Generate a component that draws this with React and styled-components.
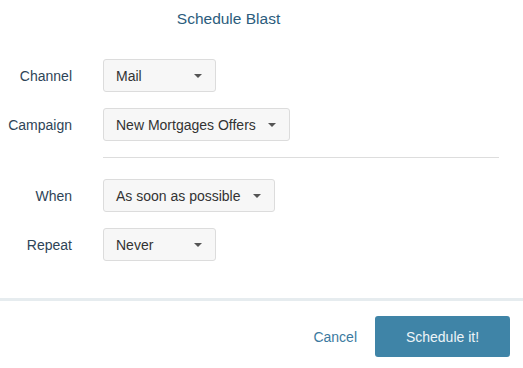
import React from "react";
import styled, { createGlobalStyle } from "styled-components";

const Global = createGlobalStyle`
  html, body { margin: 0; padding: 0; background: #ffffff; }
  body { font-family: "Liberation Sans", Arial, Helvetica, sans-serif; }
  * { box-sizing: border-box; }
`;

const Modal = styled.div`
  width: 523px;
  height: 368px;
  display: flex;
  flex-direction: column;
  background: #fff;
`;

const Header = styled.h2`
  margin: 0;
  padding: 9px 66px 0 0;
  height: 29px;
  text-align: center;
  font-size: 15.5px;
  line-height: 20px;
  font-weight: normal;
  color: #2b5c7c;
`;

const Body = styled.div`
  flex: 1;
  padding-top: 30px;
  display: flex;
  flex-direction: column;
`;

const Group = styled.div`
  display: flex;
  flex-direction: column;
  gap: 16px;
`;

const Row = styled.div`
  display: grid;
  grid-template-columns: 72px auto;
  column-gap: 31px;
  align-items: center;
  justify-items: start;
`;

const Label = styled.label`
  justify-self: end;
  font-size: 14px;
  color: #2e4457;
  white-space: nowrap;
`;

const Select = styled.button`
  display: flex;
  align-items: center;
  justify-content: space-between;
  gap: 12px;
  min-width: 113px;
  height: 33px;
  padding: 0 13px 0 12px;
  background: #f7f7f7;
  border: 1px solid #dcdcdc;
  border-radius: 3px;
  font-family: inherit;
  font-size: 14px;
  color: #333;
  white-space: nowrap;
  cursor: pointer;
`;

const Caret = styled.span`
  width: 0;
  height: 0;
  border-top: 4px solid #555;
  border-left: 4px solid transparent;
  border-right: 4px solid transparent;
  margin-top: 1px;
`;

const Divider = styled.hr`
  margin: 16px 0 21px 103px;
  width: 396px;
  border: 0;
  border-top: 1px solid #dddddd;
`;

const Footer = styled.div`
  border-top: 3px solid #e6ecef;
  padding: 15px 13px 11px;
  display: flex;
  justify-content: flex-end;
  align-items: center;
  gap: 18px;
`;

const LinkButton = styled.button`
  background: none;
  border: 0;
  padding: 0;
  font-family: inherit;
  font-size: 14px;
  color: #3b7aa0;
  cursor: pointer;
`;

const PrimaryButton = styled.button`
  width: 135px;
  height: 41px;
  background: #3f84a7;
  border: 0;
  border-radius: 3px;
  color: #eef4f8;
  font-family: inherit;
  font-size: 14px;
  cursor: pointer;
`;

const Field = ({ label, value }) => (
  <Row>
    <Label>{label}</Label>
    <Select>
      <span>{value}</span>
      <Caret />
    </Select>
  </Row>
);

export default function App() {
  return (
    <>
      <Global />
      <Modal>
        <Header>Schedule Blast</Header>
        <Body>
          <Group>
            <Field label="Channel" value="Mail" />
            <Field label="Campaign" value="New Mortgages Offers" />
          </Group>
          <Divider />
          <Group>
            <Field label="When" value="As soon as possible" />
            <Field label="Repeat" value="Never" />
          </Group>
        </Body>
        <Footer>
          <LinkButton>Cancel</LinkButton>
          <PrimaryButton>Schedule it!</PrimaryButton>
        </Footer>
      </Modal>
    </>
  );
}
